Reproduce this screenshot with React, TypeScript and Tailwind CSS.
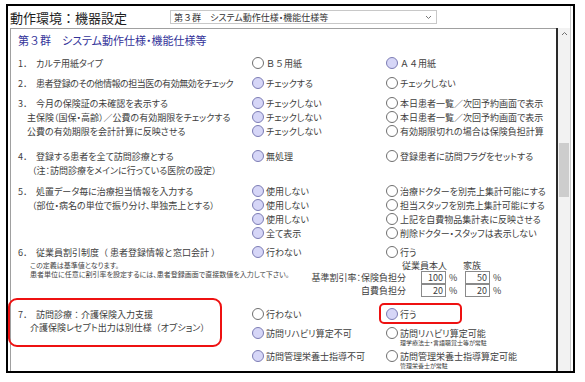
import type { ReactNode } from 'react';

const GRID = 'grid grid-cols-[234px_134px_1fr]';
const WIDE = '[font-feature-settings:normal]';

function Radio({ on }: { on?: boolean }) {
  return (
    <span
      className={`w-[12px] h-[12px] rounded-full border shrink-0 ${
        on ? 'bg-[#d6d6f7] border-[#7c7cb4]' : 'bg-white border-[#6f6f6f]'
      }`}
    />
  );
}

function Opt({ on, children }: { on?: boolean; children: ReactNode }) {
  return (
    <div className="flex items-center gap-[2px] h-[14px] whitespace-nowrap">
      <Radio on={on} />
      <span>{children}</span>
    </div>
  );
}

function Line({ className = '', children }: { className?: string; children?: ReactNode }) {
  return <div className={`h-[14px] flex items-center whitespace-nowrap ${className}`}>{children}</div>;
}

function Num({ n }: { n: string }) {
  return <span className={`inline-block w-[18px] tracking-normal ${WIDE}`}>{n}．</span>;
}

function Box({ v, className = '' }: { v: string; className?: string }) {
  return (
    <span
      className={`w-[25px] h-[13px] border border-[#8a8a8a] bg-white flex items-center justify-end pr-[2px] ${className}`}
    >
      {v}
    </span>
  );
}

export default function App() {
  return (
    <div className="relative w-[585px] h-[382px] bg-white overflow-hidden font-['Noto_Sans_CJK_JP',sans-serif] [font-feature-settings:'palt'] text-[9px] leading-none text-[#3d3d3d]">
      <div className="ml-[6px] mt-[4px] w-[569px] h-[369px] border-2 border-black flex">
        <div className="w-[562px] flex flex-col">
          {/* タイトル */}
          <div className="h-[22px] flex items-center shrink-0">
            <span className={`ml-[2px] w-[160px] text-[13px] text-[#1e1e1e] ${WIDE}`}>動作環境：機器設定</span>
            <div className="w-[267px] h-[14px] border border-[#c8c8c8] flex items-center justify-between pl-[3px] pr-[4px]">
              <span className="text-[9px] text-[#333]">
                <span className={WIDE}>第３群　</span>システム動作仕様・機能仕様等
              </span>
              <svg width="7" height="5" viewBox="0 0 7 5">
                <polyline points="1,1 3.5,3.5 6,1" fill="none" stroke="#777" strokeWidth="1" />
              </svg>
            </div>
          </div>

          <div className="flex flex-1 min-h-0">
            <div className="ml-[2px] w-[546px] border-l border-t border-[#a0a0a0] pl-[7px]">
              <div className="h-[22px] flex items-center text-[11px] text-[#33339a]">
                <span className={WIDE}>第３群　</span>システム動作仕様・機能仕様等
              </div>

              {/* 1 */}
              <div className={`${GRID} mt-[5px]`}>
                <Line>
                  <Num n="1" />
                  カルテ用紙タイプ
                </Line>
                <Opt>
                  <span className={WIDE}>Ｂ５</span>用紙
                </Opt>
                <Opt on>
                  <span className={WIDE}>Ａ４</span>用紙
                </Opt>
              </div>

              {/* 2 */}
              <div className={`${GRID} mt-[6px]`}>
                <Line className="tracking-[-0.45px]">
                  <Num n="2" />
                  患者登録のその他情報の担当医の有効無効をチェック
                </Line>
                <Opt on>チェックする</Opt>
                <Opt>チェックしない</Opt>
              </div>

              {/* 3 */}
              <div className={`${GRID} mt-[6px]`}>
                <Line>
                  <Num n="3" />
                  今月の保険証の未確認を表示する
                </Line>
                <Opt on>チェックしない</Opt>
                <Opt>本日患者一覧／次回予約画面で表示</Opt>
                <Line className="pl-[9px]">主保険（国保・高齢）／公費の有効期限をチェックする</Line>
                <Opt on>チェックしない</Opt>
                <Opt>本日患者一覧／次回予約画面で表示</Opt>
                <Line className="pl-[9px]">公費の有効期限を会計計算に反映させる</Line>
                <Opt on>チェックしない</Opt>
                <Opt>有効期限切れの場合は保険負担計算</Opt>
              </div>

              {/* 4 */}
              <div className={`${GRID} mt-[11px]`}>
                <Line>
                  <Num n="4" />
                  登録する患者を全て訪問診療とする
                </Line>
                <Opt on>無処理</Opt>
                <Opt>登録患者に訪問フラグをセットする</Opt>
                <Line className="pl-[14px]">（注：訪問診療をメインに行っている医院の設定）</Line>
                <Line />
                <Line />
              </div>

              {/* 5 */}
              <div className={`${GRID} mt-[7px]`}>
                <Line>
                  <Num n="5" />
                  処置データ毎に治療担当情報を入力する
                </Line>
                <Opt on>使用しない</Opt>
                <Opt>治療ドクターを別売上集計可能にする</Opt>
                <Line className="pl-[14px]">（部位・病名の単位で振り分け、単独売上とする）</Line>
                <Opt on>使用しない</Opt>
                <Opt>担当スタッフを別売上集計可能にする</Opt>
                <Line />
                <Opt on>使用しない</Opt>
                <Opt>上記を自費物品集計表に反映させる</Opt>
                <Line />
                <Opt on>全て表示</Opt>
                <Opt>削除ドクター・スタッフは表示しない</Opt>
              </div>

              {/* 6 */}
              <div className={`${GRID} mt-[5px]`}>
                <Line>
                  <Num n="6" />
                  従業員割引制度<span className={`whitespace-pre ${WIDE}`}>（ 患者登録情報と窓口会計 ）</span>
                </Line>
                <Opt on>行わない</Opt>
                <Opt>行う</Opt>
              </div>
              <div className="flex">
                <div className="w-[289px] pl-[12px] pt-[2px] text-[7px] leading-[9px] text-[#444] whitespace-nowrap">
                  <div>この定義は基準値となります。</div>
                  <div>患者単位に任意に割引率を設定するには、患者登録画面で直接数値を入力して下さい。</div>
                </div>
                <div className="flex flex-col">
                  <div className="h-[12px] flex items-center">
                    <span className="ml-[95px] w-[61px]">従業員本人</span>
                    <span>家族</span>
                  </div>
                  <div className="h-[13px] flex items-center">
                    <span className="w-[99px] text-right">基準割引率：保険負担分</span>
                    <Box v="100" className="ml-[15px]" />
                    <span className="w-[19px] pl-[3px]">%</span>
                    <Box v="50" />
                    <span className="pl-[3px]">%</span>
                  </div>
                  <div className="h-[13px] flex items-center">
                    <span className="w-[99px] text-right">自費負担分</span>
                    <Box v="20" className="ml-[15px]" />
                    <span className="w-[19px] pl-[3px]">%</span>
                    <Box v="20" />
                    <span className="pl-[3px]">%</span>
                  </div>
                </div>
              </div>

              {/* 7 */}
              <div className={`${GRID} mt-[10px]`}>
                <div className="flex flex-col">
                  <Line className={WIDE}>
                    <Num n="7" />
                    訪問診療：介護保険入力支援
                  </Line>
                  <Line className="pl-[12px] -mt-[1px]">
                    介護保険レセプト出力は別仕様<span className={WIDE}>（</span>オプション
                    <span className={WIDE}>）</span>
                  </Line>
                </div>
                <div className="flex flex-col">
                  <Opt>行わない</Opt>
                  <div className="mt-[5px]">
                    <Opt on>訪問リハビリ算定不可</Opt>
                  </div>
                  <div className="mt-[9px]">
                    <Opt on>訪問管理栄養士指導不可</Opt>
                  </div>
                </div>
                <div className="flex flex-col">
                  <Opt on>行う</Opt>
                  <div className="mt-[5px]">
                    <Opt>訪問リハビリ算定可能</Opt>
                    <div className="pl-[14px] text-[6px] leading-[6px]">理学療法士・言語聴覚士等が常駐</div>
                  </div>
                  <div className="mt-[3px]">
                    <Opt>訪問管理栄養士指導算定可能</Opt>
                    <div className="pl-[14px] text-[6px] leading-[6px]">管理栄養士が常駐</div>
                  </div>
                </div>
              </div>
            </div>

            <div className="w-[2px] bg-[#2a2a2a]" />
            <div className="w-[12px] bg-[#f2f2f2] flex flex-col items-center">
              <svg width="7" height="5" viewBox="0 0 7 5" className="mt-[3px]">
                <polyline points="1,4 3.5,1.5 6,4" fill="none" stroke="#707070" strokeWidth="1" />
              </svg>
              <div className="mt-[107px] w-[10px] h-[54px] bg-[#cdcdcd]" />
            </div>
          </div>
        </div>
        <div className="w-[1px] bg-[#c8c8c8]" />
      </div>

      {/* 注釈の赤枠 */}
      <div className="absolute left-[8px] top-[298px] w-[214px] h-[49px] border-[2.5px] border-[#ee1111] rounded-[9px]" />
      <div className="absolute left-[379px] top-[303px] w-[83px] h-[21px] border-[2.5px] border-[#ee1111] rounded-[5px]" />
    </div>
  );
}
